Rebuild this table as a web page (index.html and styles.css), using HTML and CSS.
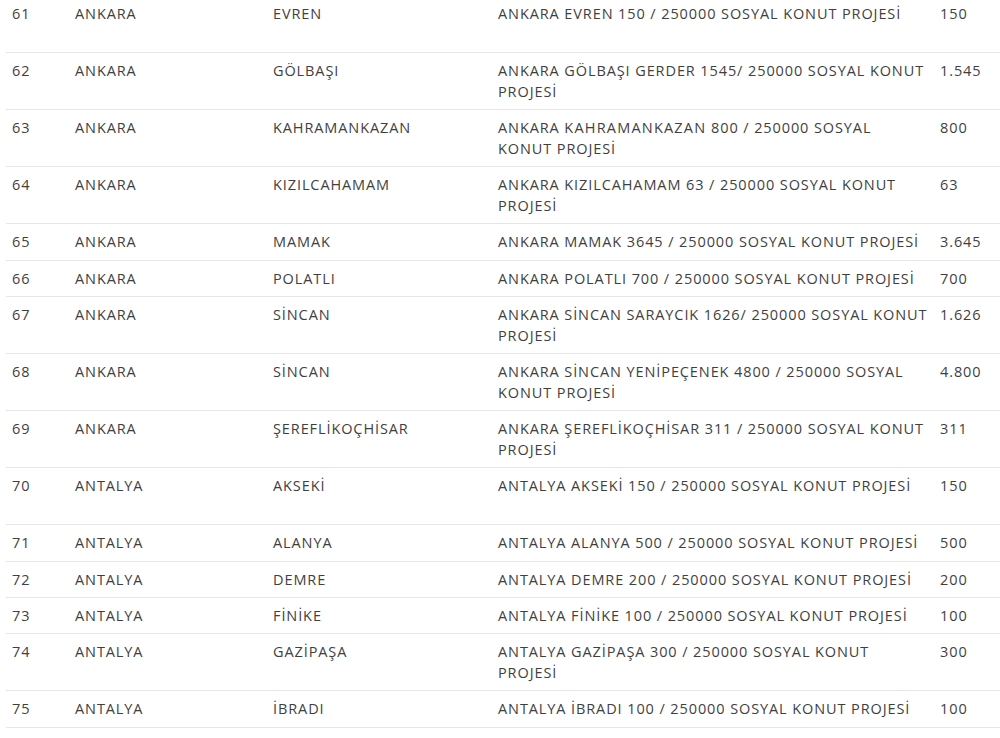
FILE: index.html
```html
<!DOCTYPE html>
<html lang="tr">
<head>
<meta charset="utf-8">
<link rel="stylesheet" href="styles.css">
</head>
<body>
<table class="list">
<colgroup><col class="c-no"><col class="c-il"><col class="c-ilce"><col class="c-desc"><col class="c-num"></colgroup>
<tbody>
<tr class="tall"><td>61</td><td>ANKARA</td><td>EVREN</td><td>ANKARA EVREN 150 / 250000 SOSYAL KONUT PROJESİ</td><td>150</td></tr>
<tr><td>62</td><td>ANKARA</td><td>GÖLBAŞI</td><td>ANKARA GÖLBAŞI GERDER 1545/ 250000 SOSYAL KONUT PROJESİ</td><td>1.545</td></tr>
<tr><td>63</td><td>ANKARA</td><td>KAHRAMANKAZAN</td><td>ANKARA <span class="wide">KAHRAMANKAZAN</span> 800 / 250000 SOSYAL KONUT PROJESİ</td><td>800</td></tr>
<tr><td>64</td><td>ANKARA</td><td>KIZILCAHAMAM</td><td>ANKARA KIZILCAHAMAM 63 / 250000 SOSYAL KONUT PROJESİ</td><td>63</td></tr>
<tr><td>65</td><td>ANKARA</td><td>MAMAK</td><td>ANKARA MAMAK 3645 / 250000 SOSYAL KONUT PROJESİ</td><td>3.645</td></tr>
<tr><td>66</td><td>ANKARA</td><td>POLATLI</td><td>ANKARA POLATLI 700 / 250000 SOSYAL KONUT PROJESİ</td><td>700</td></tr>
<tr><td>67</td><td>ANKARA</td><td>SİNCAN</td><td>ANKARA SİNCAN SARAYCIK 1626/ 250000 SOSYAL KONUT PROJESİ</td><td>1.626</td></tr>
<tr><td>68</td><td>ANKARA</td><td>SİNCAN</td><td>ANKARA SİNCAN YENİPEÇENEK 4800 / 250000 SOSYAL KONUT PROJESİ</td><td>4.800</td></tr>
<tr><td>69</td><td>ANKARA</td><td>ŞEREFLİKOÇHİSAR</td><td>ANKARA ŞEREFLİKOÇHİSAR 311 / 250000 SOSYAL KONUT PROJESİ</td><td>311</td></tr>
<tr class="tall"><td>70</td><td>ANTALYA</td><td>AKSEKİ</td><td>ANTALYA AKSEKİ 150 / 250000 SOSYAL KONUT PROJESİ</td><td>150</td></tr>
<tr><td>71</td><td>ANTALYA</td><td>ALANYA</td><td>ANTALYA ALANYA 500 / 250000 SOSYAL KONUT PROJESİ</td><td>500</td></tr>
<tr><td>72</td><td>ANTALYA</td><td>DEMRE</td><td>ANTALYA DEMRE 200 / 250000 SOSYAL KONUT PROJESİ</td><td>200</td></tr>
<tr><td>73</td><td>ANTALYA</td><td>FİNİKE</td><td>ANTALYA FİNİKE 100 / 250000 SOSYAL KONUT PROJESİ</td><td>100</td></tr>
<tr><td>74</td><td>ANTALYA</td><td>GAZİPAŞA</td><td>ANTALYA GAZİPAŞA 300 / 250000 SOSYAL KONUT PROJESİ</td><td>300</td></tr>
<tr><td>75</td><td>ANTALYA</td><td>İBRADI</td><td>ANTALYA İBRADI 100 / 250000 SOSYAL KONUT PROJESİ</td><td>100</td></tr>
</tbody>
</table>
</body>
</html>
```

FILE: styles.css
```css
html, body {
  margin: 0;
  padding: 0;
  background: #ffffff;
}
body {
  overflow: hidden;
}
.list {
  margin: -4px 0 0 6px;
  width: 1000px;
  border-collapse: collapse;
  table-layout: fixed;
  font-family: "Open Sans", "Liberation Sans", sans-serif;
  font-size: 14.5px;
  letter-spacing: 0.9px;
  line-height: 20.8px;
  color: #3f3f3f;
}
.c-no { width: 63px; }
.c-il { width: 198px; }
.c-ilce { width: 225px; }
.c-desc { width: 442px; }
.c-num { width: 72px; }
.list td {
  padding: 8px 6px 6.5px 6px;
  vertical-align: top;
  border-bottom: 1px solid #e6e6e6;
  text-align: left;
}
.list tr.tall td {
  height: 41.6px;
}
.wide {
  letter-spacing: 1.2px;
}
```
